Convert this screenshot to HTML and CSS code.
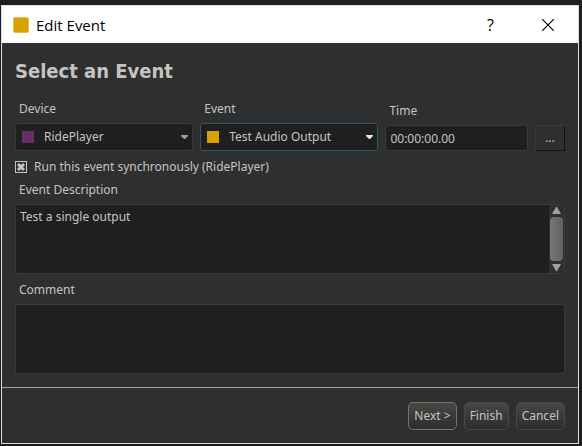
FILE: index.html
```html
<!DOCTYPE html>
<html lang="en">
<head>
  <meta charset="UTF-8">
  <meta name="viewport" content="width=device-width, initial-scale=1.0">
  <title>Edit Event</title>
  <link rel="stylesheet" href="styles.css">
</head>
<body>
  <div class="dialog">
    <header class="titlebar">
      <span class="app-icon"></span>
      <span class="title">Edit Event</span>
      <button type="button" class="window-button" aria-label="Help">?</button>
      <button type="button" class="window-button" aria-label="Close">
        <svg width="12" height="12" viewBox="0 0 12 12"><path d="M0 0L12 12M12 0L0 12" stroke="#000" stroke-width="1.2"/></svg>
      </button>
    </header>

    <form class="content">
      <h1>Select an Event</h1>

      <div class="fields">
        <div class="field">
          <label for="device">Device</label>
          <div class="box combo">
            <span class="swatch purple"></span>
            <select id="device"><option>RidePlayer</option></select>
            <svg class="arrow" width="7" height="4" viewBox="0 0 7 4"><path d="M0 0H7V1L4 4H3L0 1Z" fill="currentColor"/></svg>
          </div>
        </div>
        <div class="field">
          <label for="event">Event</label>
          <div class="box combo active">
            <span class="swatch gold"></span>
            <select id="event"><option>Test Audio Output</option></select>
            <svg class="arrow" width="7" height="4" viewBox="0 0 7 4"><path d="M0 0H7V1L4 4H3L0 1Z" fill="currentColor"/></svg>
          </div>
        </div>
        <div class="field">
          <label for="time">Time</label>
          <input type="text" id="time" class="box time" value="00:00:00.00">
        </div>
        <button type="button" class="browse" aria-label="Choose time">...</button>
      </div>

      <label class="sync">
        <input type="checkbox" checked>
        Run this event synchronously (RidePlayer)
      </label>

      <label for="description">Event Description</label>
      <div class="box area">
        <textarea id="description" readonly>Test a single output</textarea>
        <div class="scrollbar" aria-hidden="true">
          <svg width="9" height="7" viewBox="0 0 9 7"><path d="M4 0H5L9 7H0Z" fill="#a0a0a0"/></svg>
          <span class="thumb"></span>
          <svg width="9" height="7" viewBox="0 0 9 7"><path d="M0 0H9L5 7H4Z" fill="#a0a0a0"/></svg>
        </div>
      </div>

      <label for="comment">Comment</label>
      <div class="box area">
        <textarea id="comment"></textarea>
      </div>
    </form>

    <footer class="actions">
      <button type="button" class="action default">Next &gt;</button>
      <button type="button" class="action">Finish</button>
      <button type="button" class="action">Cancel</button>
    </footer>
  </div>
</body>
</html>
```

FILE: styles.css
```css
* {
  box-sizing: border-box;
}
body {
  margin: 0;
  padding: 5px 3px 2px 1px;
  min-height: 100vh;
  display: flex;
  background-color: #1e1e1e;
  color: #c4c4c4;
  font-family: Tahoma, "Noto Sans", sans-serif;
  font-size: 12px;
  line-height: 16px;
}
button, input, select, textarea {
  margin: 0;
  padding: 0;
  border: none;
  background: none;
  color: inherit;
  font: inherit;
}
.dialog {
  flex: 1;
  display: flex;
  flex-direction: column;
  border: 1px solid #dedede;
  background-color: #2f2f2f;
}
.titlebar {
  display: flex;
  align-items: center;
  height: 37px;
  padding: 0 2px 0 11px;
  background-color: #fff;
  color: #000;
}
.app-icon {
  width: 16px;
  height: 16px;
  border: 1px solid #e6bd4c;
  border-radius: 2px;
  background-color: #d8a000;
}
.title {
  flex: 1;
  margin-left: 7px;
  font-family: "Segoe UI", "Open Sans", sans-serif;
  font-size: 15px;
}
.window-button {
  width: 57px;
  height: 35px;
  display: flex;
  align-items: center;
  justify-content: center;
  font-family: "Segoe UI", "Open Sans", sans-serif;
  font-size: 16px;
}
.content {
  display: flex;
  flex-direction: column;
  padding: 16px 13px 5px;
}
h1 {
  margin: 0 0 18px;
  font-family: Tahoma, "DejaVu Sans Condensed", sans-serif;
  font-size: 20px;
  line-height: 24px;
}
label {
  padding-left: 4px;
}
.fields {
  display: grid;
  grid-template-columns: 5fr 5fr 4fr 30px;
  gap: 7px;
  align-items: end;
}
.field {
  display: flex;
  flex-direction: column;
  gap: 6px;
  min-width: 0;
}
.box {
  width: 100%;
  border: 1px solid #3a3a3a;
  border-radius: 3px;
  background-color: #1f1f1f;
}
.combo {
  display: flex;
  align-items: center;
  height: 28px;
  padding: 0 4px 0 6px;
  color: #a0a0a0;
}
.combo select {
  flex: 1;
  min-width: 0;
  margin-left: 10px;
  appearance: none;
  outline: none;
  color: #c4c4c4;
}
.combo.active {
  border-color: #2d5873;
  color: #e4e4e4;
}
.swatch {
  width: 12px;
  height: 12px;
}
.purple {
  background-color: #682d63;
}
.gold {
  background-color: #d8a000;
}
.time {
  height: 26px;
  padding: 0 4px;
}
.browse {
  height: 26px;
  border: 1px solid;
  border-color: #3a3a3a #111 #111 #3a3a3a;
}
.sync {
  display: flex;
  align-items: center;
  gap: 7px;
  margin: 8px 0 7px;
  padding: 0;
}
.sync input {
  appearance: none;
  width: 12px;
  height: 12px;
  border: 1px solid #c4c4c4;
  background: center / 8px 8px no-repeat url("data:image/svg+xml,%3Csvg xmlns='http://www.w3.org/2000/svg' viewBox='0 0 8 8'%3E%3Cpath d='M1 1L7 7M7 1L1 7' stroke='%23c4c4c4' stroke-width='3'/%3E%3C/svg%3E");
}
.area {
  display: flex;
  height: 70px;
  margin: 6px 0 8px;
}
.area textarea {
  flex: 1;
  min-width: 0;
  padding: 4px;
  resize: none;
  outline: none;
}
.scrollbar {
  display: flex;
  flex-direction: column;
  align-items: center;
  justify-content: space-between;
  width: 15px;
  padding: 2px 1px;
  background-color: #2f2f2f;
}
.thumb {
  flex: 1;
  width: 13px;
  margin: 3px 0;
  border-radius: 4px;
  background: linear-gradient(to right, #777, #606060);
}
.actions {
  display: flex;
  flex: 1;
  align-items: flex-start;
  justify-content: flex-end;
  gap: 7px;
  padding: 14px 13px 12px;
  border-top: 1px solid #a0a0a0;
}
.action {
  height: 28px;
  padding: 0 5px;
  border: 1px solid #484848;
  border-radius: 5px;
  background: linear-gradient(#474744, #2d2d2d);
}
.action.default {
  border-color: #747474;
}
```
